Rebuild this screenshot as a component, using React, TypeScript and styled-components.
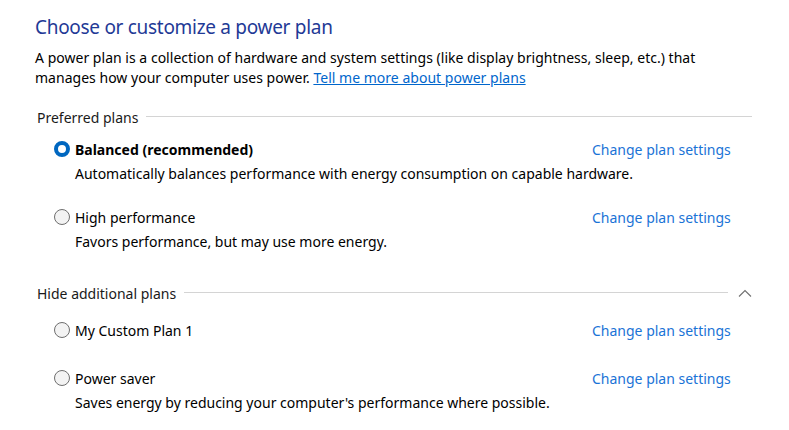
import React from "react";
import styled, { createGlobalStyle } from "styled-components";

const Global = createGlobalStyle`
  html, body { margin: 0; padding: 0; background: #ffffff; }
  body { font-family: "Noto Sans", "Open Sans", sans-serif; color: #000; }
`;

const FONT = `"Noto Sans", "Open Sans", sans-serif`;

const Page = styled.div`
  width: 789px;
  height: 430px;
  box-sizing: border-box;
  padding: 13px 37px 0 35px;
  font-family: ${FONT};
  overflow: hidden;
`;

const Title = styled.h1`
  margin: 0;
  font-weight: 400;
  font-size: 19px;
  line-height: 28px;
  color: #1f3a96;
  letter-spacing: -0.3px;
`;

const Intro = styled.p`
  margin: 7px 0 0 0;
  font-size: 14px;
  line-height: 20px;
  color: #000;
  letter-spacing: 0.02px;
`;

const Link = styled.a`
  color: #0066cc;
  text-decoration: underline;
  cursor: pointer;
`;

const SectionHeader = styled.div<{ $top: number }>`
  display: flex;
  align-items: center;
  margin-top: ${(p) => p.$top}px;
  height: 20px;
  padding-left: 2px;
`;

const SectionLabel = styled.span`
  font-size: 14px;
  color: #1a1a1a;
  white-space: nowrap;
`;

const Rule = styled.div`
  flex: 1;
  height: 1px;
  background: #d4d4d4;
  margin-left: 8px;
  margin-top: -2px;
`;

const Chevron = styled.svg`
  width: 14px;
  height: 8px;
  margin-left: 10px;
  flex: none;
`;

const PlanList = styled.div<{ $top: number }>`
  margin-top: ${(p) => p.$top}px;
  display: flex;
  flex-direction: column;
`;

const Plan = styled.div<{ $gap: number }>`
  display: grid;
  grid-template-columns: 1fr 160px;
  grid-template-rows: 24px auto;
  margin-bottom: ${(p) => p.$gap}px;
`;

const NameCell = styled.label`
  display: flex;
  align-items: center;
  padding-left: 19px;
  gap: 5px;
  font-size: 14px;
`;

const Radio = styled.span<{ $checked?: boolean }>`
  box-sizing: border-box;
  width: 16px;
  height: 16px;
  border-radius: 50%;
  flex: none;
  ${(p) =>
    p.$checked
      ? `background: #fff; border: 4.5px solid #0067c0;`
      : `background: #f3f3f3; border: 1px solid #6e6e6e;`}
`;

const PlanName = styled.span<{ $bold?: boolean }>`
  font-weight: ${(p) => (p.$bold ? 700 : 400)};
  color: #000;
`;

const ChangeLink = styled.a`
  display: flex;
  align-items: center;
  font-size: 14px;
  color: #1a73d6;
  cursor: pointer;
`;

const Desc = styled.div`
  grid-column: 1 / span 2;
  padding-left: 40px;
  font-size: 14px;
  line-height: 25px;
  color: #000;
`;

type PlanData = { name: string; desc?: string; checked?: boolean; gap: number };

const preferred: PlanData[] = [
  {
    name: "Balanced (recommended)",
    desc: "Automatically balances performance with energy consumption on capable hardware.",
    checked: true,
    gap: 19,
  },
  { name: "High performance", desc: "Favors performance, but may use more energy.", gap: 0 },
];

const additional: PlanData[] = [
  { name: "My Custom Plan 1", gap: 24 },
  {
    name: "Power saver",
    desc: "Saves energy by reducing your computer's performance where possible.",
    gap: 0,
  },
];

const PlanItem = ({ p }: { p: PlanData }) => (
  <Plan $gap={p.gap}>
    <NameCell>
      <Radio $checked={p.checked} />
      <PlanName $bold={p.checked}>{p.name}</PlanName>
    </NameCell>
    <ChangeLink>Change plan settings</ChangeLink>
    {p.desc && <Desc>{p.desc}</Desc>}
  </Plan>
);

export default function App() {
  return (
    <>
      <Global />
      <Page>
        <Title>Choose or customize a power plan</Title>
        <Intro>
          A power plan is a collection of hardware and system settings (like display brightness, sleep, etc.) that
          <br />
          manages how your computer uses power. <Link>Tell me more about power plans</Link>
        </Intro>
        <SectionHeader $top={19}>
          <SectionLabel>Preferred plans</SectionLabel>
          <Rule />
        </SectionHeader>
        <PlanList $top={10}>
          {preferred.map((p) => (
            <PlanItem key={p.name} p={p} />
          ))}
        </PlanList>
        <SectionHeader $top={29}>
          <SectionLabel>Hide additional plans</SectionLabel>
          <Rule />
          <Chevron viewBox="0 0 14 8">
            <path d="M1 7.5 L7 1.5 L13 7.5" fill="none" stroke="#707070" strokeWidth="1.1" />
          </Chevron>
        </SectionHeader>
        <PlanList $top={15}>
          {additional.map((p) => (
            <PlanItem key={p.name} p={p} />
          ))}
        </PlanList>
      </Page>
    </>
  );
}
